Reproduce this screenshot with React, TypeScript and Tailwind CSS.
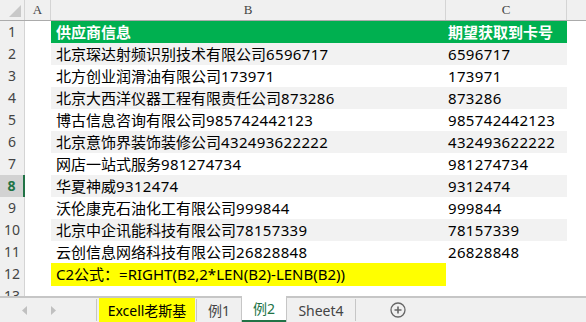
import React from "react";

const rows: [string, string][] = [
  ["北京琛达射频识别技术有限公司", "6596717"],
  ["北方创业润滑油有限公司", "173971"],
  ["北京大西洋仪器工程有限责任公司", "873286"],
  ["博古信息咨询有限公司", "985742442123"],
  ["北京意饰界装饰装修公司", "432493622222"],
  ["网店一站式服务", "981274734"],
  ["华夏神威", "9312474"],
  ["沃伦康克石油化工有限公司", "999844"],
  ["北京中企讯能科技有限公司", "78157339"],
  ["云创信息网络科技有限公司", "26828848"],
];

function RowHeader({ n, selected }: { n: number; selected?: boolean }) {
  return selected ? (
    <div className="flex h-full items-center justify-center border-b border-r-2 border-b-[#d4d4d4] border-r-[#217346] bg-[#d2d2d2] text-[14px] font-bold text-[#217346]">
      {n}
    </div>
  ) : (
    <div className="flex h-full items-center justify-center border-b border-r border-[#d4d4d4] bg-[#f0f0f0] text-[14px] text-[#444]">
      {n}
    </div>
  );
}

export default function App() {
  return (
    <div className="flex h-[322px] w-[586px] flex-col overflow-hidden bg-white font-['Noto_Sans','Noto_Sans_CJK_SC',sans-serif]">
      {/* column headers */}
      <div className="grid h-[21px] shrink-0 grid-cols-[25px_26px_395px_121px_1fr] border-b border-[#ababab] bg-[#f0f0f0] font-['Liberation_Serif',serif] text-[13px] text-[#444]">
        <div className="flex items-end justify-end border-r border-[#d4d4d4] p-[3px]">
          <div className="h-0 w-0 border-b-[12px] border-l-[12px] border-b-[#c8c8c8] border-l-transparent" />
        </div>
        <div className="flex items-center justify-center border-r border-[#d4d4d4]">A</div>
        <div className="flex items-center justify-center border-r border-[#d4d4d4]">B</div>
        <div className="flex items-center justify-center border-r border-[#d4d4d4]">C</div>
        <div />
      </div>

      {/* row 1 */}
      <div className="grid h-[22px] shrink-0 grid-cols-[25px_26px_395px_121px_1fr]">
        <RowHeader n={1} />
        <div />
        <div className="flex items-center bg-[#00b050] pl-[5px] text-[15px] font-bold text-white">供应商信息</div>
        <div className="flex items-center bg-[#00b050] pl-[2px] text-[15px] font-bold text-white">期望获取到卡号</div>
        <div />
      </div>

      {rows.map(([name, num], i) => {
        const n = i + 2;
        const band = n % 2 === 0 ? "bg-[#f2f2f2]" : "bg-white";
        return (
          <div key={n} className="grid h-[22px] shrink-0 grid-cols-[25px_26px_395px_121px_1fr]">
            <RowHeader n={n} selected={n === 8} />
            <div />
            <div className={`flex items-center whitespace-nowrap pl-[5px] text-[15px] text-black ${band}`}>
              <span>{name}</span>
              <span className="tracking-[0.35px]">{num}</span>
            </div>
            <div className={`flex items-center whitespace-nowrap pl-[2px] text-[15px] tracking-[0.35px] text-black ${band}`}>
              {num}
            </div>
            <div />
          </div>
        );
      })}

      {/* row 12 */}
      <div className="grid h-[22px] shrink-0 grid-cols-[25px_26px_395px_121px_1fr]">
        <RowHeader n={12} />
        <div />
        <div className="flex items-center whitespace-nowrap bg-[#ffff00] pl-[5px] text-[15px] text-black">
          C2公式：=RIGHT(B2,2*LEN(B2)-LENB(B2))
        </div>
        <div />
        <div />
      </div>

      {/* row 13 partial */}
      <div className="grid h-[11px] shrink-0 grid-cols-[25px_1fr] overflow-hidden">
        <div className="flex items-start justify-center overflow-hidden border-r border-[#d4d4d4] bg-[#f0f0f0] pt-[3px] text-[14px] leading-[16px] text-[#444]">
          13
        </div>
        <div />
      </div>

      {/* tab bar */}
      <div className="flex h-[26px] shrink-0 items-stretch border-t-2 border-[#c6c6c6] bg-[#f0f0f0] text-[14px]">
        <div className="flex w-[96px] items-center">
          <svg width="6" height="9" viewBox="0 0 6 9" className="ml-[22px]">
            <path d="M5 0 L0 4.5 L5 9 Z" fill="#c0c0c0" />
          </svg>
          <svg width="6" height="9" viewBox="0 0 6 9" className="ml-[22px]">
            <path d="M1 0 L6 4.5 L1 9 Z" fill="#c0c0c0" />
          </svg>
        </div>
        <div className="my-[1px] w-px bg-[#c6c6c6]" />
        <div className="ml-[2px] flex w-[96px] items-center justify-center bg-[#ffff00] text-black">Excell老斯基</div>
        <div className="my-[1px] ml-[1px] w-px bg-[#c6c6c6]" />
        <div className="flex w-[44px] items-center justify-center text-[#444]">例1</div>
        <div className="-mt-[2px] flex w-[46px] flex-col border-x border-[#c6c6c6] bg-white">
          <div className="flex flex-1 items-center justify-center pt-[1px] text-[#217346]">例2</div>
          <div className="h-[2px] bg-[#217346]" />
        </div>
        <div className="flex w-[68px] items-center justify-center text-[#444]">Sheet4</div>
        <div className="my-[1px] w-px bg-[#c6c6c6]" />
        <div className="flex items-center pl-[34px]">
          <svg width="16" height="16" viewBox="0 0 16 16">
            <circle cx="8" cy="8" r="7" fill="none" stroke="#666" strokeWidth="1.3" />
            <path d="M8 4.5 V11.5 M4.5 8 H11.5" stroke="#666" strokeWidth="1.6" />
          </svg>
        </div>
      </div>
    </div>
  );
}
